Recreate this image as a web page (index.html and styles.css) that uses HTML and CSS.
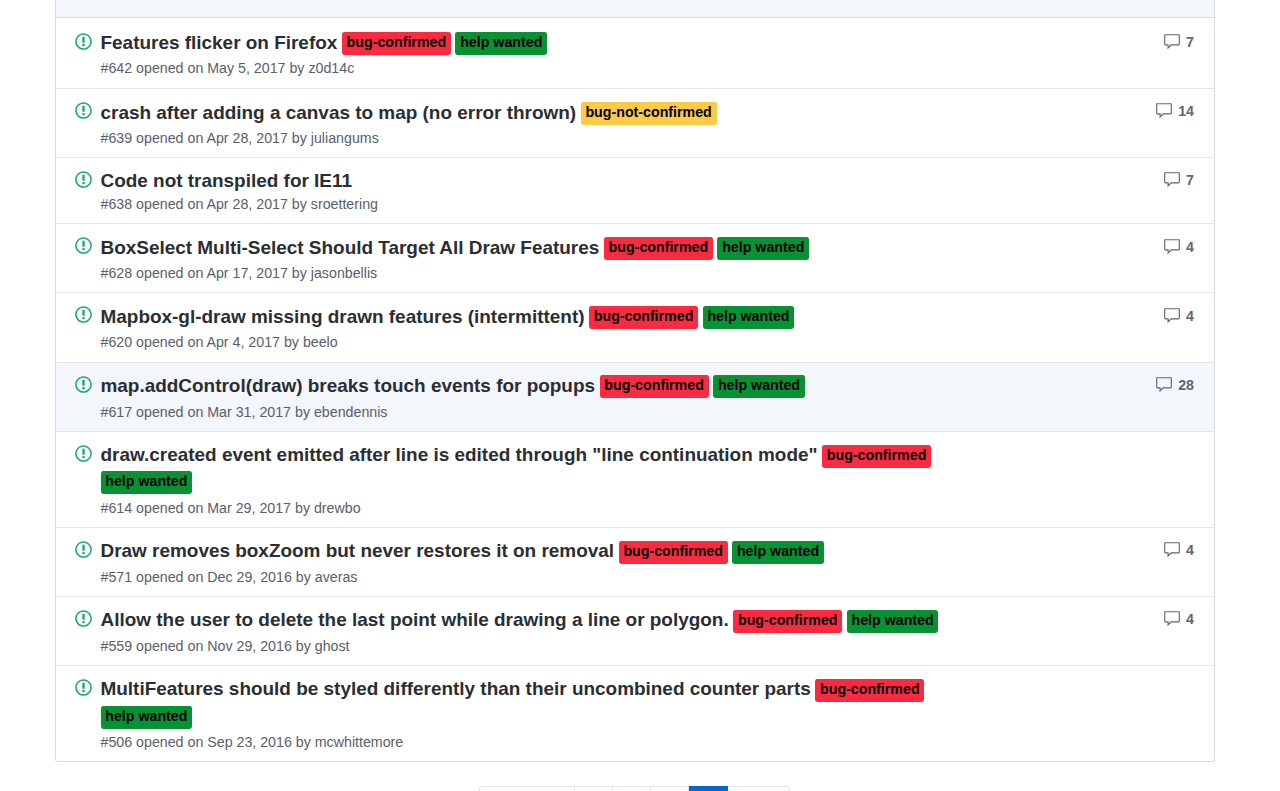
FILE: index.html
```html
<!DOCTYPE html>
<html lang="en">
<head>
<meta charset="utf-8">
<title>Issues</title>
<link rel="stylesheet" href="styles.css">
</head>
<body>
<svg class="defs" width="0" height="0" aria-hidden="true">
  <symbol id="i-issue" viewBox="0 0 14 16"><path fill-rule="evenodd" d="M7 2.3c3.14 0 5.7 2.56 5.7 5.7s-2.56 5.7-5.7 5.7A5.71 5.71 0 0 1 1.3 8c0-3.14 2.56-5.7 5.7-5.7zM7 1C3.14 1 0 4.14 0 8s3.14 7 7 7 7-3.14 7-7-3.14-7-7-7zm1 3H6v5h2V4zm0 6H6v2h2v-2z"/></symbol>
  <symbol id="i-comment" viewBox="0 0 16 16"><path fill-rule="evenodd" d="M14 1H2c-.55 0-1 .45-1 1v8c0 .55.45 1 1 1h2v3.5L7.5 11H14c.55 0 1-.45 1-1V2c0-.55-.45-1-1-1zm0 9H7l-2 2v-2H2V2h12v8z"/></symbol>
</svg>
<main class="page">
  <div class="box">
    <div class="box-header"></div>

    <div class="row first">
      <svg class="issue-icon"><use href="#i-issue"/></svg>
      <div class="main">
        <div class="title"><a class="name">Features flicker on Firefox</a> <span class="label red">bug-confirmed</span> <span class="label green">help wanted</span></div>
        <div class="meta">#642 opened on May 5, 2017 by z0d14c</div>
      </div>
      <div class="comments"><svg class="comment-icon"><use href="#i-comment"/></svg><span>7</span></div>
    </div>

    <div class="row">
      <svg class="issue-icon"><use href="#i-issue"/></svg>
      <div class="main">
        <div class="title"><a class="name">crash after adding a canvas to map (no error thrown)</a> <span class="label yellow">bug-not-confirmed</span></div>
        <div class="meta">#639 opened on Apr 28, 2017 by juliangums</div>
      </div>
      <div class="comments"><svg class="comment-icon"><use href="#i-comment"/></svg><span>14</span></div>
    </div>

    <div class="row">
      <svg class="issue-icon"><use href="#i-issue"/></svg>
      <div class="main">
        <div class="title plain"><a class="name">Code not transpiled for IE11</a></div>
        <div class="meta">#638 opened on Apr 28, 2017 by sroettering</div>
      </div>
      <div class="comments"><svg class="comment-icon"><use href="#i-comment"/></svg><span>7</span></div>
    </div>

    <div class="row">
      <svg class="issue-icon"><use href="#i-issue"/></svg>
      <div class="main">
        <div class="title"><a class="name">BoxSelect Multi-Select Should Target All Draw Features</a> <span class="label red">bug-confirmed</span> <span class="label green">help wanted</span></div>
        <div class="meta">#628 opened on Apr 17, 2017 by jasonbellis</div>
      </div>
      <div class="comments"><svg class="comment-icon"><use href="#i-comment"/></svg><span>4</span></div>
    </div>

    <div class="row">
      <svg class="issue-icon"><use href="#i-issue"/></svg>
      <div class="main">
        <div class="title"><a class="name">Mapbox-gl-draw missing drawn features (intermittent)</a> <span class="label red">bug-confirmed</span> <span class="label green">help wanted</span></div>
        <div class="meta">#620 opened on Apr 4, 2017 by beelo</div>
      </div>
      <div class="comments"><svg class="comment-icon"><use href="#i-comment"/></svg><span>4</span></div>
    </div>

    <div class="row hover">
      <svg class="issue-icon"><use href="#i-issue"/></svg>
      <div class="main">
        <div class="title"><a class="name">map.addControl(draw) breaks touch events for popups</a> <span class="label red">bug-confirmed</span> <span class="label green">help wanted</span></div>
        <div class="meta">#617 opened on Mar 31, 2017 by ebendennis</div>
      </div>
      <div class="comments"><svg class="comment-icon"><use href="#i-comment"/></svg><span>28</span></div>
    </div>

    <div class="row">
      <svg class="issue-icon"><use href="#i-issue"/></svg>
      <div class="main">
        <div class="title"><a class="name">draw.created event emitted after line is edited through "line continuation mode"</a> <span class="label red">bug-confirmed</span> <span class="label green">help wanted</span></div>
        <div class="meta">#614 opened on Mar 29, 2017 by drewbo</div>
      </div>
    </div>

    <div class="row">
      <svg class="issue-icon"><use href="#i-issue"/></svg>
      <div class="main">
        <div class="title"><a class="name">Draw removes boxZoom but never restores it on removal</a> <span class="label red">bug-confirmed</span> <span class="label green">help wanted</span></div>
        <div class="meta">#571 opened on Dec 29, 2016 by averas</div>
      </div>
      <div class="comments"><svg class="comment-icon"><use href="#i-comment"/></svg><span>4</span></div>
    </div>

    <div class="row">
      <svg class="issue-icon"><use href="#i-issue"/></svg>
      <div class="main">
        <div class="title"><a class="name">Allow the user to delete the last point while drawing a line or polygon.</a> <span class="label red">bug-confirmed</span> <span class="label green">help wanted</span></div>
        <div class="meta">#559 opened on Nov 29, 2016 by ghost</div>
      </div>
      <div class="comments"><svg class="comment-icon"><use href="#i-comment"/></svg><span>4</span></div>
    </div>

    <div class="row">
      <svg class="issue-icon"><use href="#i-issue"/></svg>
      <div class="main">
        <div class="title"><a class="name">MultiFeatures should be styled differently than their uncombined counter parts</a> <span class="label red">bug-confirmed</span> <span class="label green">help wanted</span></div>
        <div class="meta">#506 opened on Sep 23, 2016 by mcwhittemore</div>
      </div>
    </div>
  </div>

  <nav class="pagination">
    <span class="page-item prev"></span>
    <span class="page-item num"></span>
    <span class="page-item num"></span>
    <span class="page-item num"></span>
    <span class="page-item current"></span>
    <span class="page-item next"></span>
  </nav>
</main>
</body>
</html>
```
FILE: styles.css
```css
html, body {
  margin: 0;
  padding: 0;
  height: 791px;
  overflow: hidden;
  background: #fff;
}
body {
  font-family: "Liberation Sans", Arial, sans-serif;
  color: #24292e;
}
.defs { position: absolute; }
.page { padding: 0 65px 0 55px; }
.box {
  border: 1px solid #d8dbe0;
  border-top: 0;
  border-radius: 0 0 3px 3px;
  box-sizing: border-box;
  width: 1160px;
}
.box-header {
  height: 17px;
  background: #f3f6fa;
  border-bottom: 1px solid #d8dee4;
}
.row {
  display: flex;
  align-items: flex-start;
  padding: 10.5px 20px 9.1px 18.5px;
  border-bottom: 1px solid #e3e6ea;
}
.row.first { padding-top: 11.5px; padding-bottom: 10.1px; }
.row.first .issue-icon { margin-top: 2.2px; }
.row.first .comments { padding-top: 3.4px; }
.row:last-child { border-bottom: 0; }
.row.hover { background: #f3f6fa; }
.issue-icon {
  flex: none;
  width: 17px;
  height: 19px;
  margin-top: 1.5px;
  fill: #1fa971;
}
.main {
  width: 860px;
  margin-left: 9px;
}
.title {
  font-size: 18.96px;
  line-height: 26.9px;
  font-weight: 700;
  color: #2a2e33;
  word-spacing: -0.7px;
}
.title.plain { line-height: 24px; }
.name {
  color: #2a2e33;
  word-spacing: 0;
}
.label {
  display: inline-block;
  height: 23px;
  padding: 0 4.74px;
  font-size: 14.22px;
  line-height: 21px;
  font-weight: 700;
  word-spacing: 0;
  color: #000;
  border-radius: 2.4px;
  vertical-align: 1.6px;
  box-sizing: border-box;
}
.red { background: #fc2a40; }
.green { background: #079234; }
.yellow { background: #fbca47; }
.meta {
  font-size: 14.22px;
  line-height: 19px;
  margin-top: 2.6px;
  color: #586069;
}
.comments {
  margin-left: auto;
  display: flex;
  align-items: center;
  gap: 5px;
  padding-top: 2.8px;
  font-size: 14.22px;
  font-weight: 700;
  color: #5f6770;
}
.comment-icon {
  width: 18px;
  height: 18px;
  fill: #5f6770;
}
.pagination {
  display: flex;
  justify-content: center;
  margin-top: 24px;
  width: 1158px;
}
.page-item {
  display: block;
  height: 32px;
  box-sizing: border-box;
  border: 1px solid #e1e4e8;
  border-left-width: 0;
  background: #fff;
}
.prev { width: 96px; border-left-width: 1px; border-radius: 3px 0 0 0; }
.num { width: 38px; }
.current { width: 39px; background: #0366d6; border-color: #0366d6; }
.next { width: 62px; border-radius: 0 3px 0 0; }
```
